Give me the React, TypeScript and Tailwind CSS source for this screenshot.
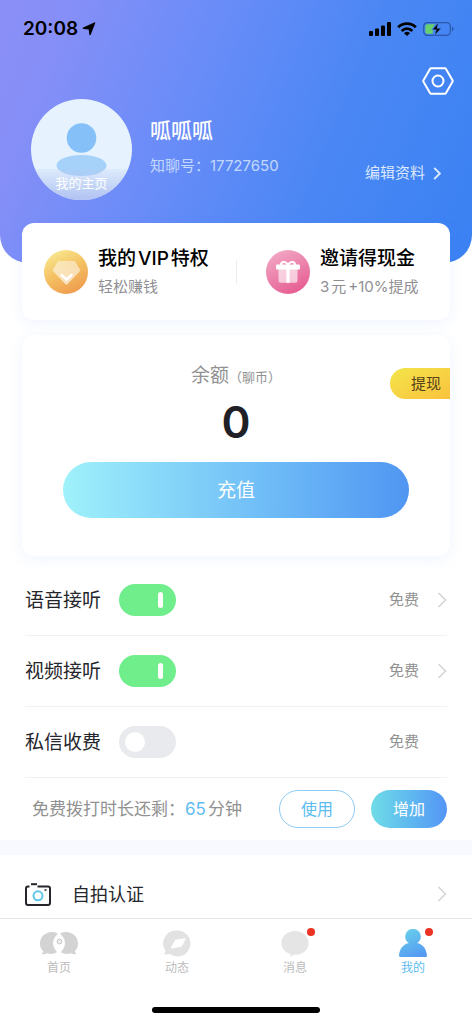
import { useState } from "react";
import type { ReactNode } from "react";

function Chevron({ className }: { className: string }) {
  return (
    <svg
      viewBox="0 0 10 16"
      fill="none"
      stroke="currentColor"
      className={className}
      aria-hidden="true"
    >
      <path d="M1.5 1l7 7-7 7" />
    </svg>
  );
}

function StatusBar() {
  return (
    <div className="flex h-[58px] items-center justify-between pl-[23px] pr-[18px] text-black">
      <div className="flex items-center gap-1">
        <span className="text-[19px] font-semibold leading-6">20:08</span>
        <svg viewBox="0 0 14 14" className="size-[14px]" fill="currentColor">
          <path d="M13.2 1.2L8.7 12.8c-.3.7-1.3.6-1.4-.2L6.7 7.6 1.4 7c-.8-.1-.9-1-.2-1.4L12.3.4c.7-.3 1.1.2.9.8z" />
        </svg>
      </div>
      <div className="flex items-center gap-[6px]">
        <svg viewBox="0 0 22 14" className="h-[14px] w-[22px]" fill="currentColor">
          <rect x="0" y="9" width="4" height="5" rx="1" />
          <rect x="6" y="6.5" width="4" height="7.5" rx="1" />
          <rect x="12" y="3.5" width="4" height="10.5" rx="1" />
          <rect x="18" y="0" width="4" height="14" rx="1" />
        </svg>
        <svg viewBox="0 0 20 14" className="h-[14px] w-5" fill="none" stroke="currentColor" strokeWidth="2.8">
          <path d="M1.2 5.2a12.4 12.4 0 0 1 17.6 0" />
          <path d="M4.7 8.9a7.5 7.5 0 0 1 10.6 0" />
          <path d="M10 14L7 11.2a4.3 4.3 0 0 1 6 0z" fill="currentColor" stroke="none" />
        </svg>
        <svg viewBox="0 0 31 14" className="h-[14px] w-[31px]">
          <rect x=".7" y=".7" width="26.6" height="12.6" rx="3.6" fill="none" stroke="#2a57a8" strokeWidth="1.2" />
          <path d="M29 4.8c1.2.4 1.6 1.2 1.6 2.2s-.4 1.8-1.6 2.2z" fill="#2a57a8" />
          <path d="M4.4 2.2H12L8.2 8.1h2.2l-1 3.7h-5a2 2 0 0 1-2-2V4.2a2 2 0 0 1 2-2z" fill="#67cf6c" />
          <path d="M15.6.6L9.2 7.8h4L11.6 13.4l6.6-7.2h-4.1z" fill="#000" stroke="#4a88ee" strokeWidth=".6" />
        </svg>
      </div>
    </div>
  );
}

function Avatar() {
  return (
    <a
      href="#home"
      className="relative block size-[101px] shrink-0 overflow-hidden rounded-full bg-[#e6f3fe]"
    >
      <svg viewBox="0 0 101 101" className="size-full" aria-hidden="true">
        <circle cx="50.5" cy="39" r="14.8" fill="#85c1f8" />
        <ellipse cx="50.5" cy="66.5" rx="25" ry="10.5" fill="#a6d1f8" />
      </svg>
      <span className="absolute inset-x-0 bottom-0 h-[31px] bg-linear-to-b from-[#b9cdf2]/20 to-[#b0c2f2] pt-1 text-center text-[13px] leading-5 text-white">
        我的主页
      </span>
    </a>
  );
}

function Profile() {
  return (
    <header className="rounded-b-[28px] bg-[linear-gradient(112deg,#8a8ff7_0%,#868ff7_12%,#688cf8_40%,#4a87f4_68%,#3a81f3_100%)] pb-[63px]">
      <StatusBar />
      <div className="flex justify-end pr-[18px] pt-[9px]">
        <button type="button" aria-label="设置" className="text-white">
          <svg viewBox="0 0 32 28" className="h-7 w-8" fill="none" stroke="currentColor" strokeWidth="2">
            <path d="M9.2 1.3h13.6q.8 0 1.2.7l6.5 11.3q.4.7 0 1.4L24 26q-.4.7-1.2.7H9.2q-.8 0-1.2-.7L1.5 14.7q-.4-.7 0-1.4L8 2q.4-.7 1.2-.7z" />
            <circle cx="16" cy="14" r="5.5" />
          </svg>
        </button>
      </div>
      <div className="flex items-start px-[31px] pt-1">
        <Avatar />
        <div className="ml-[18px] pt-[18px]">
          <h1 className="text-[21px] font-medium leading-7 text-white">呱呱呱</h1>
          <p className="mt-[9px] text-[15px] leading-6 text-[#c3d8fd]">知聊号：17727650</p>
        </div>
        <button
          type="button"
          className="ml-auto mt-[62px] flex items-center gap-2 text-[15px] leading-6 text-[#dbe8fe]"
        >
          编辑资料
          <Chevron className="h-[13px] w-2 stroke-[2.4]" />
        </button>
      </div>
    </header>
  );
}

function VipIcon() {
  return (
    <svg viewBox="0 0 44 44" className="size-11 shrink-0" aria-hidden="true">
      <defs>
        <linearGradient id="vip" x1=".2" y1="0" x2=".7" y2="1">
          <stop offset="0" stopColor="#f9ea91" />
          <stop offset=".5" stopColor="#f4c062" />
          <stop offset="1" stopColor="#ee9b4e" />
        </linearGradient>
        <linearGradient id="gem" x1="0" y1="0" x2="0" y2="1">
          <stop offset="0" stopColor="#fff" stopOpacity=".45" />
          <stop offset="1" stopColor="#fff" stopOpacity=".65" />
        </linearGradient>
      </defs>
      <circle cx="22" cy="22" r="22" fill="url(#vip)" />
      <path
        d="M15 11h15q1 0 1.5 1l4.5 7.6q.5.8-.2 1.6L23.6 34q-1.2 1.1-2.4 0L9.2 21.2q-.7-.8-.2-1.6L13.5 12q.5-1 1.5-1z"
        fill="url(#gem)"
      />
      <path
        d="M17.5 25l5 4.5 5-4.5"
        fill="none"
        stroke="#fff"
        strokeWidth="2.4"
        strokeLinecap="round"
        strokeLinejoin="round"
      />
    </svg>
  );
}

function GiftIcon() {
  return (
    <svg viewBox="0 0 44 44" className="size-11 shrink-0" aria-hidden="true">
      <defs>
        <linearGradient id="gift" x1=".2" y1="0" x2=".7" y2="1">
          <stop offset="0" stopColor="#f2a9c5" />
          <stop offset="1" stopColor="#e65c92" />
        </linearGradient>
      </defs>
      <circle cx="22" cy="22" r="22" fill="url(#gift)" />
      <path d="M12.5 19h19v11.8q0 2-2 2h-15q-2 0-2-2z" fill="#fff" opacity=".62" />
      <rect x="10" y="14.5" width="24" height="5" rx="1" fill="#fff" />
      <rect x="20.4" y="15" width="3.2" height="17.8" fill="#fff" />
      <path d="M15 15c0-4 5-4 7 0 2-4 7-4 7 0" fill="none" stroke="#fff" strokeWidth="2" />
    </svg>
  );
}

function Promo({ icon, title, note }: { icon: ReactNode; title: ReactNode; note: ReactNode }) {
  return (
    <a href="#promo" className="flex items-center gap-[10px]">
      {icon}
      <span className="whitespace-nowrap pt-[3px]">
        <span className="block text-[19px] font-medium leading-7 text-black">{title}</span>
        <span className="block text-[15px] leading-7 text-[#8f8f93]">{note}</span>
      </span>
    </a>
  );
}

function Balance() {
  return (
    <section className="mx-[22px] mt-[15px] rounded-xl bg-white pb-[38px] pt-[26px] shadow-[0_3px_14px_rgba(80,130,240,0.09)]">
      <div className="grid grid-cols-[1fr_auto_1fr] items-start">
        <span />
        <h2 className="pt-px text-[19px] leading-7 text-[#919191]">
          余额<span className="text-[13px]">（聊币）</span>
        </h2>
        <button
          type="button"
          className="mt-[7px] h-[31px] justify-self-end rounded-l-full bg-linear-to-br from-[#f3e54b] to-[#f9c23c] pl-[21px] pr-[9px] pt-px text-[15px] text-[#54431a]"
        >
          提现
        </button>
      </div>
      <p className="text-center text-[44px] font-semibold leading-[46px] text-[#1f2127]">0</p>
      <div className="mt-[17px] px-[41px]">
        <button
          type="button"
          className="h-14 w-full rounded-full bg-linear-to-r from-[#9ff1fa] to-[#5096f2] pt-[2px] text-[19px] text-white"
        >
          充值
        </button>
      </div>
    </section>
  );
}

const settings = [
  { id: "voice", label: "语音接听", price: "免费", on: true, link: true },
  { id: "video", label: "视频接听", price: "免费", on: true, link: true },
  { id: "message", label: "私信收费", price: "免费", on: false, link: false },
];

function SettingRow({ item }: { item: (typeof settings)[number] }) {
  const [on, setOn] = useState(item.on);

  return (
    <div className="flex h-[71px] items-center border-b border-[#f1f1f2]">
      <label htmlFor={item.id} className="pt-px text-[19px] leading-7 text-[#25262b]">
        {item.label}
      </label>
      <input
        id={item.id}
        type="checkbox"
        checked={on}
        onChange={(e) => setOn(e.target.checked)}
        className="ml-[18px] flex h-8 w-[57px] appearance-none items-center rounded-full bg-[#e9eaee] px-[6px] before:block before:size-5 before:rounded-full before:bg-white checked:justify-end checked:bg-[#6fee8b] checked:px-[13px] checked:before:h-4 checked:before:w-[5px]"
      />
      {item.link ? (
        <button
          type="button"
          className="ml-auto flex items-center gap-[18px] text-[15px] leading-6 text-[#919191]"
        >
          {item.price}
          <Chevron className="h-4 w-[10px] stroke-[1.4] text-[#d2d2d5]" />
        </button>
      ) : (
        <span className="ml-auto pr-7 text-[15px] leading-6 text-[#919191]">{item.price}</span>
      )}
    </div>
  );
}

function CameraIcon() {
  return (
    <svg viewBox="0 0 26 23" className="h-[23px] w-[26px]" fill="none" strokeWidth="2" aria-hidden="true">
      <path d="M4.5 3.6H3q-2 0-2 2V20q0 2 2 2h20q2 0 2-2V5.6q0-2-2-2H12.5" stroke="#25262b" />
      <path d="M6 1.2h6" stroke="#25262b" />
      <path d="M19.5 7h2" stroke="#25262b" strokeWidth="1.5" />
      <circle cx="13" cy="12.8" r="4.5" stroke="#5fc6ea" />
    </svg>
  );
}

function HomeIcon() {
  return (
    <svg viewBox="0 0 40 24" className="h-6 w-10" aria-hidden="true">
      <path
        d="M13 1C6 1 1 6 1 12.5c0 3.5 1.2 6 3.2 7.8L2.8 23.2c2.6 0 4-.3 5.2-1 3.8 1.3 7.5.8 10.5-1.2V2.2C16.8 1.4 15 1 13 1z"
        fill="#d3d3d3"
      />
      <path
        d="M27 1c7 0 12 5 12 11.5 0 3.5-1.2 6-3.2 7.8l1.4 2.9c-2.6 0-4-.3-5.2-1-3.8 1.3-7.5.8-10.5-1.2V2.2C23.2 1.4 25 1 27 1z"
        fill="#d3d3d3"
      />
      <path d="M20 2c8 6 8 14 0 21-8-7-8-15 0-21z" fill="#fff" />
      <circle cx="20.5" cy="10.5" r="2.4" fill="#eee" stroke="#c8c8c8" />
    </svg>
  );
}

function MomentsIcon() {
  return (
    <svg viewBox="0 0 28 27" className="h-[27px] w-7" aria-hidden="true">
      <path
        d="M14.5.5a13 13 0 1 1-7.6 23.6c-1.7.4-3.8.4-6.2-.1 1.3-1 1.7-2 1.6-3.5A13 13 0 0 1 14.5.5z"
        fill="#e2e2e2"
      />
      <path
        d="M13.5 9.5l8.5-1.3q1 0 .6 1l-3.4 6.6q-.4.8-1.3 1L8.4 18.6q-1 0-.5-1l4-7.1q.5-.9 1.6-1z"
        fill="#fff"
      />
    </svg>
  );
}

function MessageIcon() {
  return (
    <svg viewBox="0 0 28 27" className="h-[27px] w-7" aria-hidden="true">
      <path
        d="M14 1c7.6 0 13.6 5.2 13.6 11.9S21.6 24.8 14.2 24.8h-1.4c-1.2 1.1-2.6 1.8-3.8 1.8.6-.9.7-1.8.4-2.7C3.9 22.3.4 18.2.4 12.9.4 6.2 6.4 1 14 1z"
        fill="#e5e5e5"
      />
    </svg>
  );
}

function MineIcon() {
  return (
    <svg viewBox="0 0 28 28" className="size-7" aria-hidden="true">
      <defs>
        <linearGradient id="mine" gradientUnits="userSpaceOnUse" x1="8" y1="0" x2="20" y2="28">
          <stop offset="0" stopColor="#67cfea" />
          <stop offset="1" stopColor="#5599f3" />
        </linearGradient>
      </defs>
      <path
        d="M14 0a7.6 7.6 0 0 1 4.2 14c5.4 1.2 9.2 5.5 9.8 12.6q0 1.4-1.2 1.4H1.2Q0 28 0 26.6C.6 19.5 4.4 15.2 9.8 14A7.6 7.6 0 0 1 14 0z"
        fill="url(#mine)"
      />
    </svg>
  );
}

const tabs = [
  { label: "首页", icon: <HomeIcon />, dot: false, active: false },
  { label: "动态", icon: <MomentsIcon />, dot: false, active: false },
  { label: "消息", icon: <MessageIcon />, dot: true, active: false },
  { label: "我的", icon: <MineIcon />, dot: true, active: true },
];

function TabBar() {
  return (
    <nav className="sticky bottom-0 border-t border-[#e8e8ea] bg-white pb-[11px] pt-[9px]">
      <div className="grid grid-cols-4">
        {tabs.map((tab) => (
          <a key={tab.label} href="#tab" className="flex flex-col items-center">
            <span className="relative flex h-[30px] items-center justify-center">
              {tab.icon}
              {tab.dot && (
                <span className="absolute -right-[6px] top-0 size-2 rounded-full bg-[#ea3323]" />
              )}
            </span>
            <span
              className={
                tab.active
                  ? "text-xs leading-5 text-[#5cbcf0]"
                  : "text-xs leading-5 text-[#bcbcbc]"
              }
            >
              {tab.label}
            </span>
          </a>
        ))}
      </div>
      <div className="mx-auto mt-[29px] h-[6px] w-[168px] rounded-full bg-black" />
    </nav>
  );
}

export default function App() {
  return (
    <div className="flex min-h-screen flex-col bg-white font-['Inter','Noto_Sans_CJK_SC',sans-serif]">
      <Profile />
      <main className="-mt-10 flex-1">
        <section className="mx-[22px] grid h-[97px] grid-cols-2 items-center rounded-xl bg-white shadow-[0_3px_14px_rgba(80,130,240,0.09)]">
          <div className="pl-[22px]">
            <Promo
              icon={<VipIcon />}
              title={
                <>
                  我的<span className="mx-[2px]">VIP</span>特权
                </>
              }
              note="轻松赚钱"
            />
          </div>
          <div className="flex items-center gap-[29px]">
            <span className="h-6 w-px bg-[#ececee]" />
            <Promo
              icon={<GiftIcon />}
              title="邀请得现金"
              note={
                <>
                  3<span className="mx-[2px]">元</span>+10%提成
                </>
              }
            />
          </div>
        </section>

        <Balance />

        <section className="mt-[9px] px-[25px]">
          {settings.map((item) => (
            <SettingRow key={item.id} item={item} />
          ))}
          <div className="flex h-[62px] items-center pl-[7px]">
            <p className="whitespace-nowrap text-[17px] leading-6 text-[#919191]">
              免费拨打时长还剩：<span className="mr-[2px] text-[#5cbcf0]">65</span>分钟
            </p>
            <button
              type="button"
              className="ml-auto h-[38px] w-[76px] rounded-full border border-[#8ccbf3] text-base text-[#5cbcf0]"
            >
              使用
            </button>
            <button
              type="button"
              className="ml-4 h-[38px] w-[76px] rounded-full bg-linear-to-r from-[#70dce6] to-[#5495f5] text-base text-white"
            >
              增加
            </button>
          </div>
        </section>

        <div className="h-[15px] bg-[#f8f9fe]" />

        <a href="#verify" className="flex h-[63px] items-center px-[25px] pt-[15px]">
          <CameraIcon />
          <span className="ml-[21px] pt-[2px] text-lg leading-7 text-[#25262b]">自拍认证</span>
          <Chevron className="ml-auto h-4 w-[10px] stroke-[1.4] text-[#d2d2d5]" />
        </a>
      </main>
      <TabBar />
    </div>
  );
}
